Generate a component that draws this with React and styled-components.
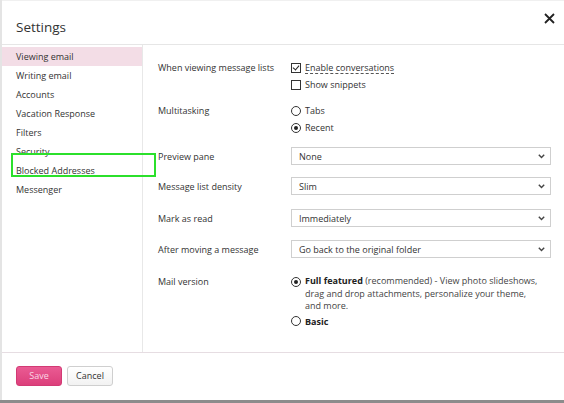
import React from "react";
import styled, { createGlobalStyle } from "styled-components";

const GlobalStyle = createGlobalStyle`
  html, body {
    margin: 0;
    padding: 0;
    background: #8c8c8c;
  }
  body {
    font-family: "Open Sans", "Noto Sans", sans-serif;
    color: #333;
  }
`;

const navItems = [
  "Viewing email",
  "Writing email",
  "Accounts",
  "Vacation Response",
  "Filters",
  "Security",
  "Blocked Addresses",
  "Messenger",
];

const selects = [
  { label: "Preview pane", value: "None", top: 11 },
  { label: "Message list density", value: "Slim", top: 12 },
  { label: "Mark as read", value: "Immediately", top: 14 },
  { label: "After moving a message", value: "Go back to the original folder", top: 13 },
];

export default function App() {
  return (
    <>
      <GlobalStyle />
      <Dialog>
        <Header>
          <Title>Settings</Title>
          <Close aria-label="Close">
            <svg width="11" height="11" viewBox="0 0 11 11">
              <path d="M1 1 L10 10 M10 1 L1 10" stroke="#222" strokeWidth="1.8" />
            </svg>
          </Close>
        </Header>
        <Body>
          <Sidebar>
            {navItems.map((item, i) => (
              <NavItem key={item} active={i === 0}>
                {item}
              </NavItem>
            ))}
          </Sidebar>
          <Content>
            <Row top={14}>
              <Label>When viewing message lists</Label>
              <Options>
                <Option>
                  <CheckBox checked />
                  <Dashed>Enable conversations</Dashed>
                </Option>
                <Option>
                  <CheckBox />
                  Show snippets
                </Option>
              </Options>
            </Row>
            <Row top={9}>
              <Label>Multitasking</Label>
              <Options>
                <Option>
                  <Radio />
                  Tabs
                </Option>
                <Option>
                  <Radio checked />
                  Recent
                </Option>
              </Options>
            </Row>
            {selects.map((s) => (
              <Row key={s.label} top={s.top} center>
                <Label>{s.label}</Label>
                <Select>
                  <span>{s.value}</span>
                  <svg width="7" height="5" viewBox="0 0 7 5">
                    <path d="M0.8 0.8 L3.5 3.6 L6.2 0.8" stroke="#444" strokeWidth="1.4" fill="none" />
                  </svg>
                </Select>
              </Row>
            ))}
            <Row top={15}>
              <Label>Mail version</Label>
              <Options>
                <Option tall>
                  <Radio checked />
                  <Para>
                    <b>Full featured</b> (recommended) - View photo slideshows,
                    <br />
                    drag and drop attachments, personalize your theme,
                    <br />
                    and more.
                  </Para>
                </Option>
                <Option>
                  <Radio />
                  <b>Basic</b>
                </Option>
              </Options>
            </Row>
          </Content>
          <Highlight />
        </Body>
        <Footer>
          <Button primary>Save</Button>
          <Button>Cancel</Button>
        </Footer>
      </Dialog>
    </>
  );
}

const Dialog = styled.div`
  position: relative;
  width: 562px;
  height: 400px;
  background: #fff;
  border-left: 2px solid #e4e4e4;
  display: flex;
  flex-direction: column;
`;

const Header = styled.div`
  box-sizing: border-box;
  height: 45px;
  border-top: 1px solid #f0f0f0;
  border-bottom: 1px solid #e6e6e6;
  display: flex;
  align-items: center;
  justify-content: space-between;
  padding: 0 9px 0 14px;
`;

const Title = styled.div`
  font-size: 13.5px;
  color: #333;
  margin-top: 8px;
`;

const Close = styled.div`
  display: flex;
  margin-top: -8px;
`;

const Body = styled.div`
  position: relative;
  height: 307px;
  display: flex;
  border-bottom: 1px solid #e6dde2;
`;

const Sidebar = styled.div`
  width: 140px;
  border-right: 1px solid #e8e8e8;
  padding-top: 2px;
`;

const NavItem = styled.div`
  height: 19px;
  line-height: 19px;
  padding-left: 14px;
  font-size: 9px;
  color: #333;
  background: ${(p) => (p.active ? "#f3dde6" : "transparent")};
`;

const Highlight = styled.div`
  position: absolute;
  left: 9px;
  top: 108px;
  width: 141px;
  height: 20px;
  border: 2px solid #2be02b;
`;

const Content = styled.div`
  flex: 1;
  padding-left: 15px;
`;

const Row = styled.div`
  display: flex;
  align-items: ${(p) => (p.center ? "center" : "flex-start")};
  margin-top: ${(p) => p.top}px;
`;

const Label = styled.div`
  width: 133px;
  flex-shrink: 0;
  font-size: 9px;
  line-height: 17px;
  color: #333;
`;

const Options = styled.div`
  display: flex;
  flex-direction: column;
  width: 260px;
`;

const Option = styled.div`
  display: flex;
  align-items: ${(p) => (p.tall ? "flex-start" : "center")};
  gap: 4px;
  min-height: 17px;
  font-size: 9px;
  line-height: 17px;
  color: #333;
  b {
    font-weight: 700;
    color: #222;
  }
  & > span:first-child {
    margin-top: ${(p) => (p.tall ? "4px" : "0")};
  }
`;

const Para = styled.div`
  line-height: 12.5px;
  padding-top: 2px;
  color: #444;
`;

const Dashed = styled.span`
  border-bottom: 1px dashed #555;
  line-height: 11px;
`;

const CheckBox = styled.span`
  width: 8px;
  height: 8px;
  border: 1px solid #333;
  flex-shrink: 0;
  position: relative;
  &::after {
    content: "";
    display: ${(p) => (p.checked ? "block" : "none")};
    position: absolute;
    left: 2px;
    top: 0px;
    width: 3px;
    height: 5px;
    border: solid #222;
    border-width: 0 1.5px 1.5px 0;
    transform: rotate(40deg);
  }
`;

const Radio = styled.span`
  width: 8px;
  height: 8px;
  border: 1px solid #333;
  border-radius: 50%;
  flex-shrink: 0;
  position: relative;
  &::after {
    content: "";
    display: ${(p) => (p.checked ? "block" : "none")};
    position: absolute;
    left: 2px;
    top: 2px;
    width: 4px;
    height: 4px;
    border-radius: 50%;
    background: #222;
  }
`;

const Select = styled.div`
  width: 260px;
  height: 18px;
  box-sizing: border-box;
  border: 1px solid #cfcfcf;
  display: flex;
  align-items: center;
  justify-content: space-between;
  padding: 0 5px 0 7px;
  font-size: 9px;
  color: #333;
`;

const Footer = styled.div`
  flex: 1;
  display: flex;
  align-items: center;
  gap: 5px;
  padding-left: 14px;
  padding-bottom: 2px;
`;

const Button = styled.button`
  width: 46px;
  height: 20px;
  border-radius: 3px;
  font-family: "Open Sans", "Noto Sans", sans-serif;
  font-size: 9px;
  padding: 0;
  border: 1px solid ${(p) => (p.primary ? "#d23a74" : "#cfcfcf")};
  background: ${(p) =>
    p.primary ? "linear-gradient(#ea5b93, #dc3f7b)" : "linear-gradient(#fff, #f2f2f2)"};
  color: ${(p) => (p.primary ? "#fbd6e5" : "#333")};
`;
